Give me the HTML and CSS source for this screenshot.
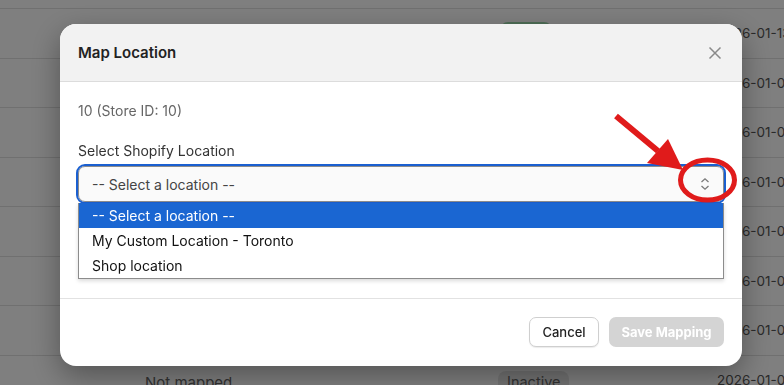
FILE: index.html
```html
<!DOCTYPE html>
<html>
<head>
    <title>Map Location</title>
    <link rel="stylesheet" href="styles.css">
</head>
<body>
    <div class="page">
        <div class="row"><span></span><span class="badge badge-active">Active</span><span class="date">2026-01-13</span></div>
        <div class="row"><span></span><span></span><span class="date">2026-01-09</span></div>
        <div class="row"><span></span><span></span><span class="date">2026-01-09</span></div>
        <div class="row"><span></span><span></span><span class="date">2026-01-08</span></div>
        <div class="row"><span></span><span></span><span class="date">2026-01-08</span></div>
        <div class="row"><span></span><span></span><span class="date">2026-01-07</span></div>
        <div class="row"><span></span><span></span><span class="date">2026-01-07</span></div>
        <div class="row"><span class="muted">Not mapped</span><span class="badge badge-inactive">Inactive</span><span class="date">2026-01-06</span></div>
    </div>

    <div class="backdrop">
        <div class="modal">
            <div class="modal-header">
                <h2>Map Location</h2>
                <button class="close" title="Close">
                    <svg width="14" height="14" viewBox="0 0 14 14"><path d="M1.5 1.5l11 11M12.5 1.5l-11 11" stroke="#8a8a8a" stroke-width="1.5" fill="none"/></svg>
                </button>
            </div>
            <div class="modal-body">
                <p class="store">10 (Store ID: 10)</p>
                <label class="field-label">Select Shopify Location</label>
                <div class="select-wrap">
                    <div class="select">
                        <span>-- Select a location --</span>
                        <svg width="10" height="14" viewBox="0 0 10 14"><path d="M1.5 5L5 1.8 8.5 5M1.5 9L5 12.2 8.5 9" stroke="#7a7a7a" stroke-width="1.3" fill="none"/></svg>
                    </div>
                    <ul class="options">
                        <li class="selected">-- Select a location --</li>
                        <li>My Custom Location - Toronto</li>
                        <li>Shop location</li>
                    </ul>
                </div>
            </div>
            <div class="modal-footer">
                <button class="btn btn-cancel">Cancel</button>
                <button class="btn btn-save" disabled>Save Mapping</button>
            </div>
        </div>
    </div>

    <!-- annotation on top of the screenshot -->
    <svg class="annotation" width="784" height="385" viewBox="0 0 784 385">
        <ellipse cx="707.5" cy="180" rx="27" ry="20" stroke="#e01b1b" stroke-width="5" fill="none"/>
        <path d="M616 116L658 151" stroke="#e01b1b" stroke-width="6" fill="none"/>
        <path d="M647 163L668 139L683 170Z" fill="#e01b1b"/>
    </svg>
</body>
</html>
```

FILE: styles.css
```css
body {
    margin: 0;
    padding: 0;
    overflow: hidden;
    background-color: #fff;
    font-family: Inter, "Liberation Sans", sans-serif;
    color: #222;
}
.page {
    padding-top: 8px;
    width: 900px;
}
.row {
    height: 49.5px;
    box-sizing: border-box;
    border-top: 1px solid #e0e0e0;
    display: grid;
    grid-template-columns: 353px 219px 1fr;
    align-items: center;
    padding-left: 145px;
    font-size: 14px;
    white-space: nowrap;
}
.date {
    color: #555;
    font-size: 13.5px;
}
.muted {
    color: #666;
    font-size: 15px;
    margin-top: 6px;
}
.badge {
    justify-self: start;
    padding: 0 9px;
    height: 22px;
    line-height: 22px;
    border-radius: 8px;
    font-size: 14px;
}
.badge-active {
    background-color: #9edcae;
    width: 34px;
    margin-left: 2px;
    color: #1d6b32;
}
.badge-inactive {
    background-color: #e6e6e6;
    color: #666;
    font-size: 14.5px;
    margin-top: 4px;
}
.backdrop {
    position: fixed;
    inset: 0;
    background-color: rgba(0, 0, 0, 0.5);
}
.modal {
    margin: 24px 0 0 60px;
    width: 682px;
    background-color: #fff;
    border-radius: 16px;
    overflow: hidden;
    box-shadow: 0 10px 30px rgba(0, 0, 0, 0.35);
}
.modal-header {
    height: 57px;
    background-color: #f2f2f2;
    border-bottom: 1px solid #dcdcdc;
    display: flex;
    align-items: center;
    justify-content: space-between;
    padding: 0 16px 0 18px;
}
.modal-header h2 {
    margin: 0;
    font-size: 15px;
    font-weight: 600;
    color: #222;
}
.close {
    background: none;
    border: none;
    padding: 4px;
    display: flex;
    cursor: pointer;
}
.modal-body {
    padding: 19px 18px 96px;
}
.store {
    margin: 0 0 20px;
    font-size: 14px;
    line-height: 20px;
    color: #666;
}
.field-label {
    display: block;
    font-size: 14px;
    line-height: 20px;
    color: #333;
    margin-bottom: 5px;
}
.select-wrap {
    position: relative;
}
.select {
    height: 36px;
    box-sizing: border-box;
    border: 1px solid #8c8c8c;
    border-radius: 7px;
    outline: 2px solid #1a5fd0;
    background-color: #fafafa;
    display: flex;
    align-items: center;
    justify-content: space-between;
    padding: 0 13px 0 13px;
    font-size: 14px;
    color: #444;
}
.options {
    position: absolute;
    top: 37px;
    left: 0;
    width: 646px;
    box-sizing: border-box;
    margin: 0;
    padding: 0;
    list-style: none;
    background-color: #fff;
    border: 1px solid #8c8c8c;
    border-top: none;
    box-shadow: 0 2px 4px rgba(0, 0, 0, 0.15);
    font-size: 14px;
    color: #111;
}
.options li {
    height: 25px;
    line-height: 25px;
    padding-left: 13px;
}
.options li.selected {
    background-color: #1a66d2;
    color: #fff;
}
.modal-footer {
    border-top: 1px solid #e2e2e2;
    padding: 18px 18px 19px;
    display: flex;
    justify-content: flex-end;
    gap: 10px;
}
.btn {
    height: 30px;
    border-radius: 7px;
    font-family: Inter, "Liberation Sans", sans-serif;
    font-size: 13px;
    padding: 0 12px;
    cursor: pointer;
}
.btn-cancel {
    width: 70px;
    background-color: #fff;
    border: 1px solid #cfcfcf;
    color: #222;
    font-weight: 500;
    box-shadow: 0 1px 1px rgba(0, 0, 0, 0.08);
}
.btn-save {
    width: 115px;
    background-color: #d4d4d4;
    border: none;
    color: #fff;
    font-weight: 700;
}
.annotation {
    position: fixed;
    top: 0;
    left: 0;
    pointer-events: none;
}
```
